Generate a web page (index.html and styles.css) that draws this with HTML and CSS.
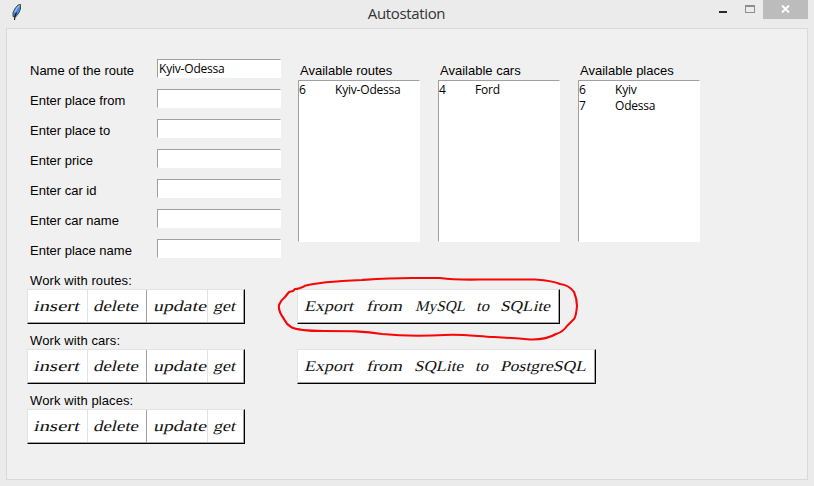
FILE: index.html
```html
<!DOCTYPE html>
<html lang="en">
<head>
<meta charset="utf-8">
<title>Autostation</title>
<link rel="stylesheet" href="styles.css">
</head>
<body>
<header class="titlebar">
  <svg class="feather" width="10" height="17" viewBox="0 0 10 17">
    <path d="M1 12.5V8.5L3 4.5L6 1L8.5.5V5L6.5 9.5L3.5 13Z" fill="#4387d9" stroke="#3a3d45" stroke-width=".9"/>
    <path d="M2.5 8.5L5.5 3.5L7.5 1.5" fill="none" stroke="#a9c5e7" stroke-width="1.2"/>
    <path d="M4.5 8.5L3 12L2.5 16" fill="none" stroke="#111" stroke-width="1.1"/>
  </svg>
  <h1 class="title">Autostation</h1>
  <div class="controls">
    <span class="minimize"></span>
    <span class="maximize"></span>
    <span class="close"><svg width="9" height="8" viewBox="0 0 9 8"><path d="M1 .5L8 7.5M8 .5L1 7.5" stroke="#fff" stroke-width="1.9"/></svg></span>
  </div>
</header>
<main class="window">
  <div class="top">
    <form class="fields">
      <label class="field"><span class="label">Name of the route</span><span class="entry">Kyiv-Odessa</span></label>
      <label class="field"><span class="label">Enter place from</span><span class="entry"></span></label>
      <label class="field"><span class="label">Enter place to</span><span class="entry"></span></label>
      <label class="field"><span class="label">Enter price</span><span class="entry"></span></label>
      <label class="field"><span class="label">Enter car id</span><span class="entry"></span></label>
      <label class="field"><span class="label">Enter car name</span><span class="entry"></span></label>
      <label class="field"><span class="label">Enter place name</span><span class="entry"></span></label>
    </form>
    <section class="group">
      <h2 class="label">Available routes</h2>
      <div class="list"><div class="item"><span>6</span><span>Kyiv-Odessa</span></div></div>
    </section>
    <section class="group">
      <h2 class="label">Available cars</h2>
      <div class="list"><div class="item"><span>4</span><span>Ford</span></div></div>
    </section>
    <section class="group">
      <h2 class="label">Available places</h2>
      <div class="list"><div class="item"><span>6</span><span>Kyiv</span></div><div class="item"><span>7</span><span>Odessa</span></div></div>
    </section>
  </div>
  <div class="work">
    <h2 class="label">Work with routes:</h2>
    <div class="row">
      <div class="actions">
        <svg class="text" width="217" height="33"><g transform="translate(0 20.5) skewX(-14)"><text x="5" textLength="46" lengthAdjust="spacingAndGlyphs">insert</text><text x="65" textLength="45" lengthAdjust="spacingAndGlyphs">delete</text><text x="125" textLength="53" lengthAdjust="spacingAndGlyphs">update</text><text x="185" textLength="22" lengthAdjust="spacingAndGlyphs">get</text></g></svg>
        <span class="cell"></span><span class="cell shaded"></span><span class="cell"></span><span class="cell last"></span>
      </div>
      <div class="export mysql">
        <svg class="text" width="260" height="33"><g transform="translate(0 20.5) skewX(-14)"><text x="6" textLength="49" lengthAdjust="spacingAndGlyphs">Export</text><text x="68" textLength="36" lengthAdjust="spacingAndGlyphs">from</text><text x="117" textLength="50" lengthAdjust="spacingAndGlyphs">MySQL</text><text x="178" textLength="13" lengthAdjust="spacingAndGlyphs">to</text><text x="202" textLength="50" lengthAdjust="spacingAndGlyphs">SQLite</text></g></svg>
      </div>
    </div>
    <h2 class="label">Work with cars:</h2>
    <div class="row">
      <div class="actions">
        <svg class="text" width="217" height="33"><g transform="translate(0 20.5) skewX(-14)"><text x="5" textLength="46" lengthAdjust="spacingAndGlyphs">insert</text><text x="65" textLength="45" lengthAdjust="spacingAndGlyphs">delete</text><text x="125" textLength="53" lengthAdjust="spacingAndGlyphs">update</text><text x="185" textLength="22" lengthAdjust="spacingAndGlyphs">get</text></g></svg>
        <span class="cell"></span><span class="cell shaded"></span><span class="cell"></span><span class="cell last"></span>
      </div>
      <div class="export postgres">
        <svg class="text" width="296" height="33"><g transform="translate(0 20.5) skewX(-14)"><text x="6" textLength="49" lengthAdjust="spacingAndGlyphs">Export</text><text x="68" textLength="36" lengthAdjust="spacingAndGlyphs">from</text><text x="116" textLength="49" lengthAdjust="spacingAndGlyphs">SQLite</text><text x="177" textLength="13" lengthAdjust="spacingAndGlyphs">to</text><text x="202" textLength="86" lengthAdjust="spacingAndGlyphs">PostgreSQL</text></g></svg>
      </div>
    </div>
    <h2 class="label">Work with places:</h2>
    <div class="row">
      <div class="actions">
        <svg class="text" width="217" height="33"><g transform="translate(0 20.5) skewX(-14)"><text x="5" textLength="46" lengthAdjust="spacingAndGlyphs">insert</text><text x="65" textLength="45" lengthAdjust="spacingAndGlyphs">delete</text><text x="125" textLength="53" lengthAdjust="spacingAndGlyphs">update</text><text x="185" textLength="22" lengthAdjust="spacingAndGlyphs">get</text></g></svg>
        <span class="cell"></span><span class="cell shaded"></span><span class="cell"></span><span class="cell last"></span>
      </div>
    </div>
  </div>
</main>
<svg class="circle" width="304" height="68" viewBox="275 274 304 68"><path d="M304 286C318 282 337 281 362 280C376 279 389 278 412 278L440 278Q455 280 480 279.5L535 279.5Q554 281 560 284Q569 285 574 292Q577 299 577 306Q576 317 574 319L567 326Q563 332 556 334Q546 340 530 339.5Q513 338 494 337C475 336 460 334 445 335Q410 337 382 334C364 331 350 331 324 331Q298 331 291 327C286 324 286 323 284 319Q278 311 279 305Q281 300 285 297L289 292L293 291L295 289Q299 289 305 286"/></svg>
</body>
</html>
```
FILE: styles.css
```css
* { box-sizing: border-box; }
body {
  margin: 0;
  width: 814px;
  height: 486px;
  position: relative;
  overflow: hidden;
  background: #ebebeb;
  color: #000;
  font: 13px/20px "Liberation Sans", Arial, sans-serif;
}
.titlebar {
  display: grid;
  grid-template-columns: 120px 1fr 120px;
  height: 28px;
  padding: 0 6px 0 5px;
}
.feather { margin: 4px 0 0 7px; }
.title {
  margin: 0;
  text-align: center;
  font: 15px/27px "Open Sans", "Noto Sans", sans-serif;
  letter-spacing: -.35px;
  color: #333;
}
.controls { display: flex; justify-content: flex-end; }
.minimize { width: 8px; height: 2px; margin: 11px 18px 0 0; background: #292929; }
.maximize { width: 10px; height: 8px; margin: 5px 8px 0 0; border: 1px solid #8d8d8d; border-top-width: 2px; }
.close { width: 45px; height: 19px; padding: 5px 0 0 18px; background: #bcbcbc; line-height: 0; }
.window {
  width: 802px;
  height: 452px;
  margin-left: 6px;
  padding-top: 31px;
  border: 1px solid #d9d9d9;
  background: #f0f0f0;
}
.top { display: flex; height: 210px; }
.fields { width: 291px; padding-left: 23px; }
.field { display: flex; height: 30px; }
.label { margin: 0; font-size: 13px; font-weight: 400; line-height: 22px; white-space: nowrap; }
.field .label { width: 127px; }
.entry {
  width: 124px;
  height: 19px;
  margin-top: -1px;
  padding-left: 1px;
  border: 1px solid #fff;
  border-top-color: #a0a0a0;
  border-left-color: #a0a0a0;
  background: #fff;
  font: 12px/18px "Open Sans", "Noto Sans", sans-serif;
  letter-spacing: -.2px;
}
.group { width: 140px; }
.group .label { height: 20px; padding-left: 2px; }
.list {
  width: 122px;
  height: 162px;
  padding-top: 1px;
  border: 1px solid #fff;
  border-top-color: #a0a0a0;
  border-left-color: #a0a0a0;
  background: #fff;
  font: 12px/16px "Open Sans", "Noto Sans", sans-serif;
  letter-spacing: -.2px;
}
.item { display: grid; grid-template-columns: 36px 1fr; }
.work { padding-left: 20px; }
.work .label { height: 19px; padding-left: 3px; letter-spacing: .1px; }
.row { display: flex; gap: 52px; height: 41px; }
.actions, .export {
  position: relative;
  height: 35px;
  border: 1px solid #e3e3e3;
  border-right-color: #000;
  border-bottom: 1px solid #000;
  background: #fff;
  box-shadow: inset -1px -1px #a0a0a0;
}
.actions { display: flex; width: 218px; }
.mysql { width: 263px; }
.postgres { width: 299px; }
.cell { width: 60px; border-right: 1px solid #e3e3e3; height: 32px; }
.shaded { width: 59px; border-color: #a0a0a0; }
.cell:nth-of-type(3) { width: 61px; }
.last { width: 36px; border: 0; }
.text {
  position: absolute;
  left: 0;
  top: 0;
  overflow: visible;
  fill: #111;
  font: 15px "Liberation Serif", "Times New Roman", serif;
}
.circle {
  position: absolute;
  left: 275px;
  top: 274px;
  fill: none;
  stroke: #f60707;
  stroke-width: 2.1;
  stroke-linejoin: round;
}
```
